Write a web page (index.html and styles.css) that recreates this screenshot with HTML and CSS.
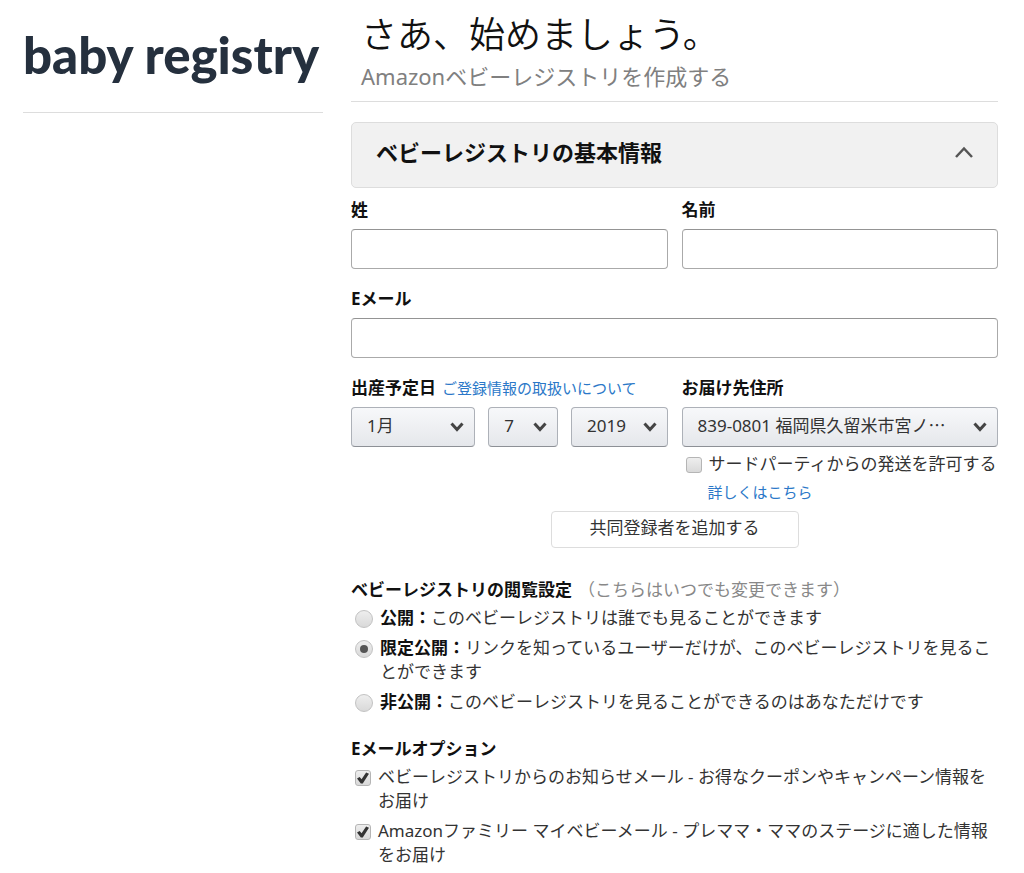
FILE: index.html
```html
<!DOCTYPE html>
<html lang="ja">
<head>
<meta charset="utf-8">
<meta name="viewport" content="width=device-width, initial-scale=1">
<title>ベビーレジストリ</title>
<link rel="stylesheet" href="styles.css">
</head>
<body>
<div class="page">
  <aside class="sidebar">
    <div class="logo">baby registry</div>
  </aside>
  <main class="main">
    <header class="intro">
      <h1 class="title">さあ、始めましょう。</h1>
      <p class="subtitle">Amazonベビーレジストリを作成する</p>
    </header>
    <form>
      <button class="panel" type="button" aria-expanded="true">
        <span>ベビーレジストリの基本情報</span>
        <svg class="panel-icon" viewBox="0 0 20 14" aria-hidden="true"><path d="M2 12 10 3.500 18 12"/></svg>
      </button>

      <div class="fields">
        <div class="field">
          <label class="label" for="family">姓</label>
          <input class="text" id="family" type="text">
        </div>
        <div class="field">
          <label class="label" for="given">名前</label>
          <input class="text" id="given" type="text">
        </div>
        <div class="field field-wide">
          <label class="label" for="email">Eメール</label>
          <input class="text" id="email" type="email">
        </div>
        <div class="field">
          <div class="label-row">
            <label class="label" for="month">出産予定日</label>
            <a class="link" href="#">ご登録情報の取扱いについて</a>
          </div>
          <div class="dates">
            <div class="select">
              <select id="month"><option>1月</option></select>
              <svg class="chevron" viewBox="0 0 14 10" aria-hidden="true"><path d="M1.500 1.500 7 7.500 12.500 1.500"/></svg>
            </div>
            <div class="select">
              <select aria-label="日"><option>7</option></select>
              <svg class="chevron" viewBox="0 0 14 10" aria-hidden="true"><path d="M1.500 1.500 7 7.500 12.500 1.500"/></svg>
            </div>
            <div class="select">
              <select aria-label="年"><option>2019</option></select>
              <svg class="chevron" viewBox="0 0 14 10" aria-hidden="true"><path d="M1.500 1.500 7 7.500 12.500 1.500"/></svg>
            </div>
          </div>
        </div>
        <div class="field">
          <label class="label" for="address">お届け先住所</label>
          <div class="select">
            <select id="address"><option>839-0801 福岡県久留米市宮ノ⋯</option></select>
            <svg class="chevron" viewBox="0 0 14 10" aria-hidden="true"><path d="M1.500 1.500 7 7.500 12.500 1.500"/></svg>
          </div>
          <div class="third-party">
            <label class="choice"><input class="check" type="checkbox"><span>サードパーティからの発送を許可する</span></label>
            <a class="link more" href="#">詳しくはこちら</a>
          </div>
        </div>
      </div>

      <button class="add" type="button">共同登録者を追加する</button>

      <fieldset class="group">
        <legend class="label">ベビーレジストリの閲覧設定<span class="hint">（こちらはいつでも変更できます）</span></legend>
        <div class="choices">
          <label class="choice"><input class="radio" type="radio" name="privacy"><span><b>公開：</b>このベビーレジストリは誰でも見ることができます</span></label>
          <label class="choice"><input class="radio" type="radio" name="privacy" checked><span><b>限定公開：</b>リンクを知っているユーザーだけが、このベビーレジストリを見ることができます</span></label>
          <label class="choice"><input class="radio" type="radio" name="privacy"><span><b>非公開：</b>このベビーレジストリを見ることができるのはあなただけです</span></label>
        </div>
      </fieldset>

      <fieldset class="group">
        <legend class="label">Eメールオプション</legend>
        <div class="choices">
          <label class="choice"><input class="check" type="checkbox" checked><span>ベビーレジストリからのお知らせメール - お得なクーポンやキャンペーン情報をお届け</span></label>
          <label class="choice"><input class="check" type="checkbox" checked><span>Amazonファミリー マイベビーメール - プレママ・ママのステージに適した情報をお届け</span></label>
        </div>
      </fieldset>
    </form>
  </main>
</div>
</body>
</html>
```
FILE: styles.css
```css
* { box-sizing: border-box; }

body {
  margin: 0;
  background: #fff;
  color: #333;
  font-family: "Noto Sans", "Noto Sans CJK JP", sans-serif;
  font-size: 17px;
  font-weight: 400;
  line-height: 24px;
}

button, input, select { font: inherit; color: inherit; }

.page {
  display: grid;
  grid-template-columns: 300px minmax(0, 1fr);
  gap: 28px;
  align-items: start;
  padding: 13px 26px 4px 23px;
}

.sidebar {
  padding: 12px 0 27px;
  border-bottom: 1px solid #ddd;
}

.logo {
  color: #25303e;
  font-family: Lato, sans-serif;
  font-size: 51px;
  font-weight: 900;
  line-height: 60px;
  white-space: nowrap;
}

.intro {
  margin-bottom: 20px;
  padding: 0 10px 9px;
  border-bottom: 1px solid #ddd;
}

.title {
  margin: 0 0 3px;
  color: #111;
  font-size: 36px;
  font-weight: 350;
  line-height: 44px;
}

.subtitle {
  margin: 0;
  color: #808080;
  font-size: 22px;
  line-height: 32px;
}

.panel {
  display: flex;
  align-items: center;
  justify-content: space-between;
  width: 100%;
  margin-bottom: 10px;
  padding: 13px 23px 19px 24px;
  border: 1px solid #ddd;
  border-radius: 5px;
  background: #f1f1f1;
  color: #111;
  font-size: 22px;
  font-weight: 700;
  line-height: 32px;
  text-align: left;
}

.panel-icon {
  width: 20px;
  height: 14px;
  fill: none;
  stroke: #555;
  stroke-width: 2.500;
}

.fields {
  display: grid;
  grid-template-columns: repeat(2, minmax(0, 1fr));
  gap: 18px 14px;
}

.field {
  display: flex;
  flex-direction: column;
  gap: 7px;
}

.field-wide { grid-column: 1 / -1; }

.label {
  color: #111;
  font-weight: 700;
}

.label-row {
  display: flex;
  gap: 6px;
  white-space: nowrap;
}

.link {
  color: #2b78c8;
  font-size: 15px;
  text-decoration: none;
}

.text {
  width: 100%;
  height: 40px;
  padding: 0 12px;
  border: 1px solid #aaa;
  border-top-color: #949494;
  border-radius: 4px;
  background: #fff;
}

.dates {
  display: grid;
  grid-template-columns: 125fr 70fr 97fr;
  gap: 13px;
}

.select { position: relative; }

.select select {
  display: block;
  width: 100%;
  height: 40px;
  padding: 0 30px 2px 15px;
  border: 1px solid #adb1b8;
  border-bottom-color: #8d9096;
  border-radius: 4px;
  background: linear-gradient(#f7f8fa, #e5e7eb);
  appearance: none;
}

.chevron {
  position: absolute;
  top: 15px;
  right: 11px;
  width: 14px;
  height: 10px;
  fill: none;
  stroke: #444;
  stroke-width: 3;
  pointer-events: none;
}

.third-party {
  display: flex;
  flex-direction: column;
  gap: 4px;
  margin-top: -2px;
  white-space: nowrap;
}

.more { padding-left: 26px; }

.add {
  display: block;
  width: 248px;
  margin: 7px auto 30px;
  padding: 4px 12px 7px;
  border: 1px solid #ddd;
  border-radius: 4px;
  background: #fff;
}

.group {
  margin: 0 0 23px;
  padding: 0;
  border: 0;
}

.group .label { padding: 0; }

.hint {
  margin-left: 6px;
  color: #888;
  font-weight: 400;
}

.choices {
  display: grid;
  gap: 6px;
  padding-top: 4px;
}

.choice {
  display: flex;
  gap: 7px;
  padding-left: 4px;
}

.choice b {
  color: #111;
  font-weight: 700;
}

.check, .radio {
  flex: none;
  display: grid;
  place-items: center;
  border: 1px solid #b5b5b5;
  background: linear-gradient(#eee, #d9d9d9);
  appearance: none;
}

.check {
  width: 16px;
  height: 16px;
  margin: 5px 0 0;
  border-radius: 3px;
}

.radio {
  width: 18px;
  height: 18px;
  margin: 4px 0 0;
  border-color: #c2c2c2;
  border-radius: 50%;
}

.check:checked::before {
  content: "";
  width: 12px;
  height: 12px;
  background: #333;
  clip-path: polygon(0 55%, 22% 42%, 38% 60%, 76% 4%, 100% 14%, 48% 96%, 32% 96%);
}

.radio:checked::before {
  content: "";
  width: 8px;
  height: 8px;
  border-radius: 50%;
  background: #555;
}
```
